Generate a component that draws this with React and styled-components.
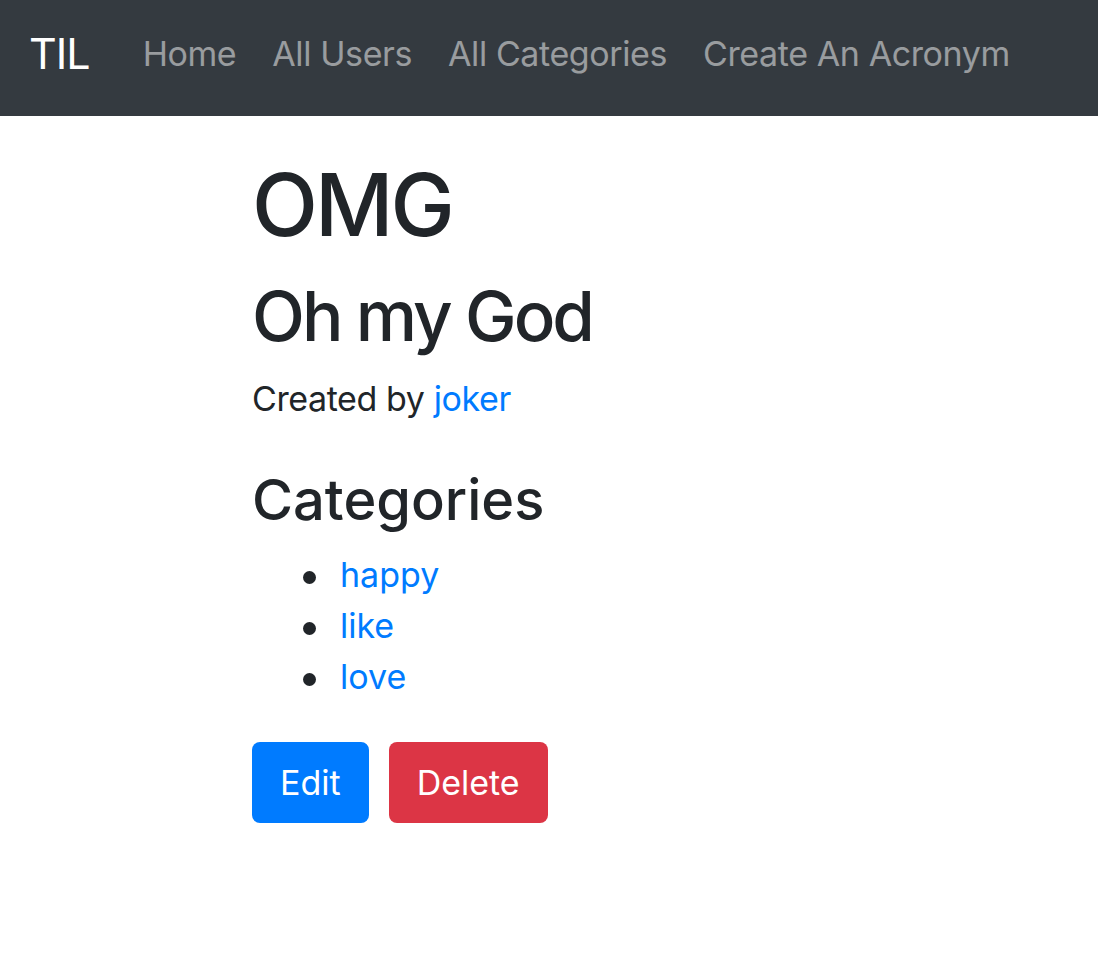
import styled, { createGlobalStyle } from 'styled-components';

const GlobalStyle = createGlobalStyle`
  html, body {
    margin: 0;
    padding: 0;
    background: #fff;
  }
  body {
    font-family: Inter, "Noto Sans", "Liberation Sans", sans-serif;
    font-size: 34px;
    line-height: 1.5;
    color: #212529;
  }
`;

const Navbar = styled.nav`
  display: flex;
  align-items: center;
  height: 116px;
  box-sizing: border-box;
  padding: 0 32px 10px 29px;
  background: #343a40;
`;

const Brand = styled.a`
  font-size: 43px;
  line-height: 1.5;
  letter-spacing: -1px;
  color: #fff;
  margin-right: 35px;
  text-decoration: none;
`;

const NavList = styled.ul`
  display: flex;
  list-style: none;
  margin: 0;
  padding: 0;
`;

const NavLink = styled.a`
  display: block;
  padding: 0 18px;
  font-size: 34px;
  letter-spacing: -0.4px;
  color: rgba(255, 255, 255, 0.5);
  text-decoration: none;
`;

const Container = styled.main`
  max-width: 594px;
  margin: 0 auto;
  padding: 38px 30px 0;
`;

const Title = styled.h1`
  margin: 0 0 18px;
  font-size: 86px;
  font-weight: 500;
  line-height: 1.2;
  letter-spacing: -3px;
`;

const Subtitle = styled.h2`
  margin: 0 0 15px;
  font-size: 69px;
  font-weight: 500;
  line-height: 1.2;
  letter-spacing: -3px;
`;

const Text = styled.p`
  margin: 0 0 43px;
  letter-spacing: -0.4px;
`;

const Section = styled.h3`
  margin: 0 0 15px;
  font-size: 56px;
  font-weight: 500;
  line-height: 1.2;
`;

const List = styled.ul`
  margin: 0 0 40px;
  padding-left: 88px;
  list-style: none;
`;

const Item = styled.li`
  &::before {
    content: '';
    display: inline-block;
    width: 13px;
    height: 13px;
    margin: 0 24px 0 -37px;
    border-radius: 50%;
    background: #212529;
    vertical-align: middle;
  }
`;

const Link = styled.a`
  color: #007bff;
  text-decoration: none;
`;

const Actions = styled.div`
  display: flex;
  gap: 20px;
`;

const Button = styled.button`
  font-family: inherit;
  font-size: 34px;
  line-height: 1.5;
  height: 81px;
  padding: 0 28px;
  border: none;
  border-radius: 8px;
  color: #fff;
  background: ${(p) => (p.$danger ? '#dc3545' : '#007bff')};
`;

const navItems = ['Home', 'All Users', 'All Categories', 'Create An Acronym'];
const categories = ['happy', 'like', 'love'];

export default function App() {
  return (
    <>
      <GlobalStyle />
      <Navbar>
        <Brand href="#">TIL</Brand>
        <NavList>
          {navItems.map((item) => (
            <li key={item}>
              <NavLink href="#">{item}</NavLink>
            </li>
          ))}
        </NavList>
      </Navbar>
      <Container>
        <Title>OMG</Title>
        <Subtitle>Oh my God</Subtitle>
        <Text>
          Created by <Link href="#">joker</Link>
        </Text>
        <Section>Categories</Section>
        <List>
          {categories.map((c) => (
            <Item key={c}>
              <Link href="#">{c}</Link>
            </Item>
          ))}
        </List>
        <Actions>
          <Button>Edit</Button>
          <Button $danger>Delete</Button>
        </Actions>
      </Container>
    </>
  );
}
